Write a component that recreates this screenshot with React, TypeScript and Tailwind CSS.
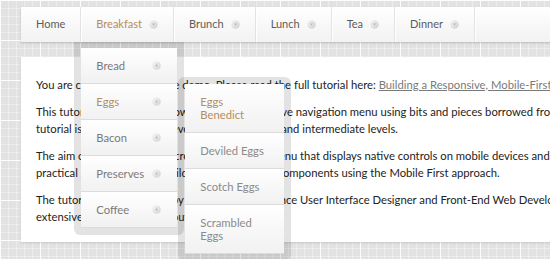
import React from "react";

function NavArrow() {
  return (
    <svg width="9" height="9" viewBox="0 0 9 9" className="shrink-0">
      <defs>
        <linearGradient id="ng" x1="0" y1="0" x2="1" y2="1">
          <stop offset="0" stopColor="#f4f4f4" />
          <stop offset="1" stopColor="#cfcfcf" />
        </linearGradient>
      </defs>
      <circle cx="4.5" cy="4.5" r="4.3" fill="url(#ng)" />
      <path d="M3 3.6 L6 3.6 L4.5 5.6 Z" fill="#b5b5b5" />
    </svg>
  );
}

function SideArrow() {
  return (
    <svg width="9" height="9" viewBox="0 0 9 9" className="shrink-0">
      <defs>
        <linearGradient id="sg" x1="0" y1="0" x2="1" y2="1">
          <stop offset="0" stopColor="#f6f6f6" />
          <stop offset="1" stopColor="#d2d2d2" />
        </linearGradient>
      </defs>
      <circle cx="4.5" cy="4.5" r="4.3" fill="url(#sg)" />
      <path d="M3.8 3 L5.7 4.5 L3.8 6 Z" fill="#b8b8b8" />
    </svg>
  );
}

const subItems = [
  { label: ["Eggs", "Benedict"], active: true },
  { label: ["Deviled Eggs"] },
  { label: ["Scotch Eggs"] },
  { label: ["Scrambled", "Eggs"] },
];

function SubMenu() {
  return (
    <div className="absolute left-[calc(100%+1px)] top-[-7px] z-40 w-[113px] rounded-[6px] bg-black/[0.11] px-[7px] pt-[7px] pb-[7px]">
      <ul className="bg-white">
        {subItems.map((s, i) => (
          <li
            key={i}
            className={`border-b border-[#dcdcdc] bg-gradient-to-b from-white to-[#f1f1f1] py-[11px] pl-[15px] pr-[10px] text-[11.25px] leading-[13px] ${
              s.active ? "text-[#b38d5e]" : "text-[#8a8a8a]"
            }`}
          >
            {s.label.map((l, j) => (
              <div key={j}>{l}</div>
            ))}
          </li>
        ))}
      </ul>
    </div>
  );
}

const dropItems = ["Bread", "Eggs", "Bacon", "Preserves", "Coffee"];

function DropDown() {
  return (
    <div className="absolute left-[-7px] top-full z-30 w-[110px] rounded-b-[6px] bg-black/[0.11] px-[7px] pt-[6px] pb-[7px]">
      <ul className="bg-white">
        {dropItems.map((d) => (
          <li
            key={d}
            className={`relative flex items-center justify-between border-b border-[#dcdcdc] bg-gradient-to-b from-white to-[#f1f1f1] py-[11px] pl-[15px] pr-[16px] text-[11.25px] leading-[13px] ${
              d === "Eggs" ? "text-[#b38d5e]" : "text-[#7a7a7a]"
            }`}
          >
            <span>{d}</span>
            <SideArrow />
            {d === "Eggs" && <SubMenu />}
          </li>
        ))}
      </ul>
    </div>
  );
}

const navItems = ["Home", "Breakfast", "Brunch", "Lunch", "Tea", "Dinner"];

export default function App() {
  return (
    <div className="h-[259px] w-[550px] overflow-hidden bg-[#e2e2e2] bg-[linear-gradient(rgba(255,255,255,0.9)_1px,transparent_1px),linear-gradient(90deg,rgba(255,255,255,0.9)_1px,transparent_1px),linear-gradient(rgba(255,255,255,0.35)_1px,transparent_1px),linear-gradient(90deg,rgba(255,255,255,0.35)_1px,transparent_1px)] bg-[size:40px_40px,40px_40px,8px_8px,8px_8px] font-['Lato',sans-serif]">
      <div className="w-[620px] pl-[21px] pt-[7px]">
        <nav className="relative z-20 flex h-[35px] bg-gradient-to-b from-white to-[#f2f2f2] shadow-[0_1px_2px_rgba(0,0,0,0.18)]">
          {navItems.map((n) => (
            <div
              key={n}
              className={`relative flex items-center gap-[7px] border-r border-[#e3e3e3] shadow-[1px_0_0_#fff] pl-[15px] pr-[15px] text-[11px] ${
                n === "Breakfast" ? "text-[#b38d5e]" : "text-[#5c5c5c]"
              }`}
            >
              <span>{n}</span>
              {n !== "Home" && <NavArrow />}
              {n === "Breakfast" && <DropDown />}
            </div>
          ))}
        </nav>
        <main className="relative z-10 mt-[15px] h-[185px] bg-white pl-[15px] pt-[19px] text-[11.25px] leading-[17px] text-[#222] shadow-[0_1px_2px_rgba(0,0,0,0.12)]">
          <p className="mb-[10px] whitespace-nowrap">
            You are currently viewing the demo. Please read the full tutorial here:{" "}
            <a className="text-[#7a7a7a] underline">Building a Responsive, Mobile-First Navigation Menu</a>
          </p>
          <p className="mb-[10px] whitespace-nowrap">
            This tutorial will show you how to build a responsive navigation menu using bits and pieces borrowed from the
            <br />
            tutorial is targeted at web developers of beginner and intermediate levels.
          </p>
          <p className="mb-[10px] whitespace-nowrap">
            The aim of this tutorial is to create a dropdown menu that displays native controls on mobile devices and takes a
            <br />
            practical guide on how to build all the navigation components using the Mobile First approach.
          </p>
          <p className="mb-[10px] whitespace-nowrap">
            The tutorial was written up by our author, a freelance User Interface Designer and Front-End Web Developer with
            <br />
            extensive experience on layout and design.
          </p>
        </main>
      </div>
    </div>
  );
}
